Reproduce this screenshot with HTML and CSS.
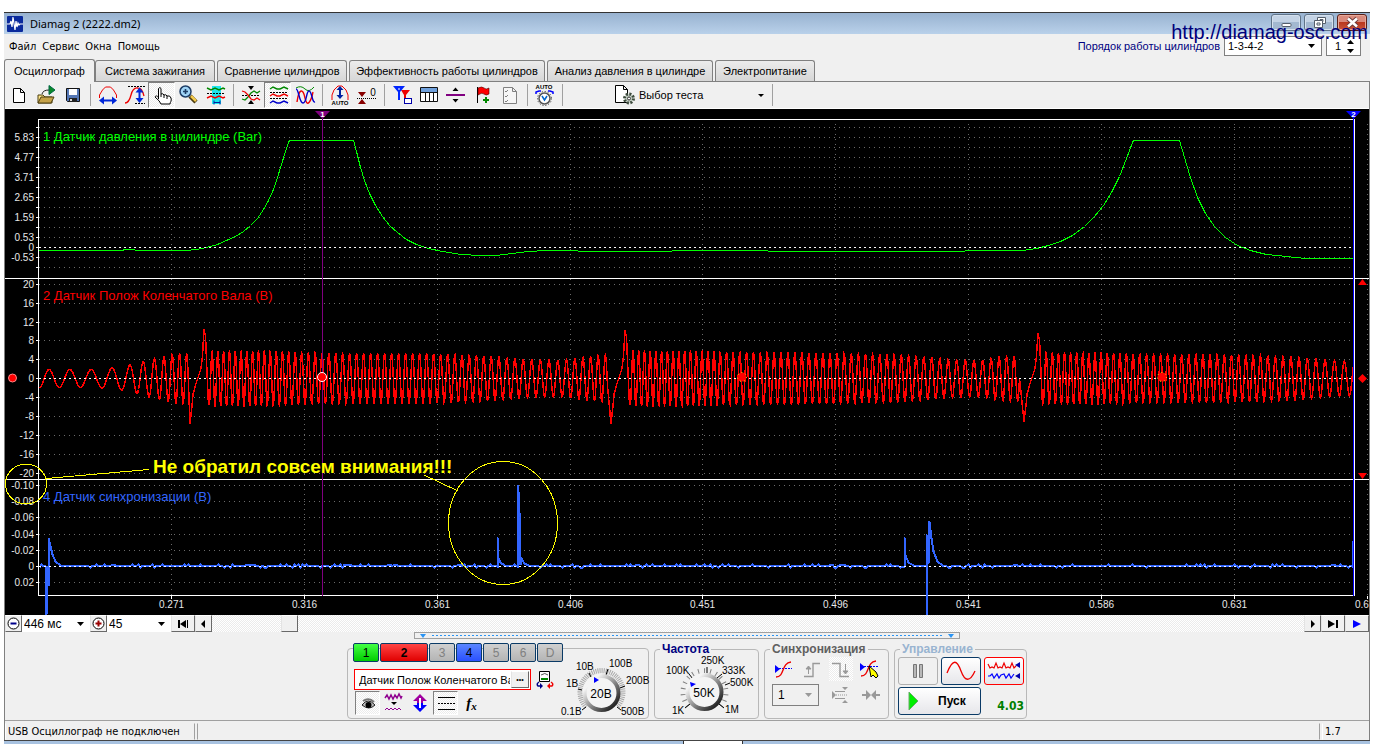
FILE: index.html
```html
<!DOCTYPE html>
<html lang="ru">
<head>
<meta charset="utf-8">
<title>Diamag 2 (2222.dm2)</title>
<link rel="stylesheet" href="styles.css">
</head>
<body>
<div class="window">
  <header class="titlebar">
    <svg class="app-icon" width="16" height="16" viewBox="0 0 16 16"><rect width="16" height="16" rx="1" fill="#0a2a9c"/><path d="M0 8h3l1-3 1 6 1-10 2 13 1-9 1 6 1-4 1 2 1-1h4" fill="none" stroke="#fff" stroke-width="1.2"/></svg>
    <h1 class="title">Diamag 2 (2222.dm2)</h1>
    <div class="window-buttons">
      <button class="wbtn" aria-label="Свернуть"><svg width="28" height="15"><rect x="10" y="8.500" width="9" height="3" rx="1" fill="#fff" stroke="#555e6b"/></svg></button>
      <button class="wbtn" aria-label="Восстановить"><svg width="28" height="15" fill="#fff" stroke="#555e6b"><path d="M12.500 2.500h8v6h-8zM15 4.500h3v2h-3z"/><path d="M9.500 5.500h8v7h-8zM12 8h3v2h-3z"/></svg></button>
      <button class="wbtn close" aria-label="Закрыть"><svg width="28" height="15"><path d="M10 3.500l9 8m0-8l-9 8" stroke="#6a3a3a" stroke-width="4.500"/><path d="M10 3.500l9 8m0-8l-9 8" stroke="#fff" stroke-width="2.600"/></svg></button>
    </div>
    <a class="site" href="#">http://diamag-osc.com</a>
  </header>

  <div class="menubar">
    <nav class="menu"><button>Файл</button><button>Сервис</button><button>Окна</button><button>Помощь</button></nav>
    <div class="order">
      <label for="order">Порядок работы цилиндров</label>
      <span class="box order-box"><select id="order"><option>1-3-4-2</option></select><svg width="7" height="4"><path d="M0 0h7L3.500 4z"/></svg></span>
      <span class="box spin-box"><input id="cyl" type="text" value="1" aria-label="Цилиндр"><svg width="7" height="13"><path d="M0 4h7L3.500 0zM0 9h7l-3.500 4z"/></svg></span>
    </div>
  </div>

  <nav class="tabs">
    <button class="tab active">Осциллограф</button>
    <button class="tab">Система зажигания</button>
    <button class="tab">Сравнение цилиндров</button>
    <button class="tab">Эффективность работы цилиндров</button>
    <button class="tab">Анализ давления в цилиндре</button>
    <button class="tab">Электропитание</button>
  </nav>

  <div class="workspace">
    <div class="toolbar">
      <button class="tool" aria-label="Новый"><svg width="24" height="22" viewBox="6 83 24 22"><path d="M12.500 87.500h7l4 4v10h-11zM19.500 87.500v4h4" fill="#fff" stroke="#000"/></svg></button>
      <button class="tool" aria-label="Открыть"><svg width="24" height="22" viewBox="33 83 24 22"><path d="M37 94h5l2 2h7v6H37z" fill="#ffe68a" stroke="#4d3f10"/><path d="M37 102l3-6h13l-3 6z" fill="#c5a24a" stroke="#4d3f10"/><path d="M41 93q1-4 7-4" fill="none" stroke="#222"/><path d="M48 84.500v9l6-4.500z" fill="#0a8a2a" stroke="#064"/></svg></button>
      <button class="tool" aria-label="Сохранить"><svg width="24" height="22" viewBox="60 83 24 22"><path d="M65.500 87.500h13v13h-12l-1-1z" fill="#5577b5" stroke="#111"/><path d="M68 88h8v6h-8z" fill="#fff"/><path d="M68 97h8v4h-8z" fill="#222"/><path d="M69 98h2v2h-2z" fill="#ddd"/></svg></button>
      <i class="sep"></i>
      <button class="tool" aria-label="Масштаб по времени"><svg width="24" height="22" viewBox="95 83 24 22"><path d="M98.500 97v-3l3-5 3-3h5l3 3 3 5v3" fill="none" stroke="#e00"/><path d="M100 99.500h14" stroke="#0026d8" stroke-width="2"/><path d="M98 99.500l5-4v8zM116 99.500l-5-4v8z" fill="#0026d8"/></svg></button>
      <button class="tool" aria-label="Масштаб по амплитуде"><svg width="24" height="22" viewBox="122 83 24 22"><path d="M127 85.500h17" stroke="#000" stroke-dasharray="2 1"/><path d="M134 102.500h10" stroke="#000" stroke-dasharray="2 1"/><path d="M124 102q4 0 6-8t7-7q4 0 6 8" fill="none" stroke="#e00" stroke-width="1.300"/><path d="M138.500 89v10" stroke="#0026d8" stroke-width="2"/><path d="M138.500 86.500l4 5h-8zM138.500 102l4-5h-8z" fill="#0026d8"/></svg></button>
      <button class="tool pressed" aria-label="Рука"><svg width="24" height="22" viewBox="149 83 24 22"><path d="M157.500 98V87.500q1.500-2 2.500 0V93q2-1 3 1 2-1 3 1 3-1 4 2c1 3-1 4-1 6h-9q-1-3-6-7c1-2 3-1 3.500 1M160 93v3M163 94v3M166 95v3" fill="#fff" stroke="#000"/></svg></button>
      <button class="tool" aria-label="Лупа"><svg width="24" height="22" viewBox="176 83 24 22"><path d="M189 95l6 6" stroke="#4a3a10" stroke-width="4.500"/><path d="M190 95l5 5" stroke="#f2c94c" stroke-width="2.500"/><circle cx="184.500" cy="90.500" r="5.500" fill="#9fd4f7" stroke="#1d3d66" stroke-width="1.500"/><path d="M182 90.500h5m-2.500-2.500v5" stroke="#1d3d66" stroke-width="1.600"/></svg></button>
      <button class="tool" aria-label="Выделение"><svg width="24" height="22" viewBox="203 83 24 22"><path d="M211 85h9v18h-9z" fill="#1ee6f0"/><path d="M206 87l4 2 4-2 4 2 4-2 2 1" fill="none" stroke="#080" stroke-width="1.400"/><path d="M206 92.500h18" stroke="#000" stroke-dasharray="2 1"/><path d="M206 97l4-2 4 2 4-2 4 2 2-1" fill="none" stroke="#e00" stroke-width="1.400"/><path d="M213 101.500h6m-6-2v4m6-4v4" stroke="#0020a0"/></svg></button>
      <i class="sep"></i>
      <button class="tool" aria-label="Совместить"><svg width="24" height="22" viewBox="238 83 24 22"><path d="M247 85h6l-3 4zM247 103h6l-3-4z"/><path d="M241 94.500h18" stroke="#000" stroke-dasharray="2 1"/><path d="M241 98l3 1 3-3 3-4 3-2 3 2 3-2" fill="none" stroke="#080" stroke-width="1.300"/><path d="M241 90l3 1 3 3 3 4 3 1 3-2 3 2" fill="none" stroke="#e00" stroke-width="1.300"/></svg></button>
      <button class="tool pressed" aria-label="Раздельно"><svg width="24" height="22" viewBox="265 83 24 22"><path d="M269 88l3-2 4 2h3l4-2 4 2" fill="none" stroke="#080" stroke-width="1.400"/><path d="M269 91.500h18M269 97.500h18" stroke="#000" stroke-dasharray="2 1"/><path d="M269 95l3-2 4 2h3l4-2 4 2" fill="none" stroke="#e00" stroke-width="1.400"/><path d="M269 102l3-2 4 2h3l4-2 4 2" fill="none" stroke="#00c" stroke-width="1.400"/></svg></button>
      <button class="tool" aria-label="Наложить"><svg width="24" height="22" viewBox="292 83 24 22"><path d="M295 87q5-3 9 1t9-2" fill="none" stroke="#080"/><path d="M296 101c2-14 6-14 8-4s6 4 8-6" fill="none" stroke="#e00" stroke-width="1.400"/><path d="M295 88c3 0 3 14 7 14s3-12 6-12 3 12 6 11" fill="none" stroke="#00c" stroke-width="1.400"/></svg></button>
      <i class="sep"></i>
      <button class="tool" aria-label="Автомасштаб"><svg width="24" height="22" viewBox="327 83 24 22"><path d="M331 99v-5l2-5 4-4h4l4 4 2 5v5" fill="none" stroke="#e00"/><path d="M339 87v9" stroke="#0020a0" stroke-width="2"/><path d="M339 85l3.500 4h-7zM339 98l3.500-4h-7z" fill="#0020a0"/><text class="t-auto" x="339" y="104">AUTO</text></svg></button>
      <button class="tool" aria-label="Обнулить"><svg width="24" height="22" viewBox="354 83 24 22"><path d="M357 91h8l-4 5zM357 103h8l-4-5z" fill="#800"/><path d="M356 97.500h20" stroke="#000" stroke-dasharray="1 1"/><text class="t-zero" x="372" y="95">0</text></svg></button>
      <i class="sep"></i>
      <button class="tool" aria-label="Фильтр"><svg width="24" height="22" viewBox="389 83 24 22"><path d="M400 89h9l-4 5v7h-2v-7z" fill="#e00"/><path d="M392 85h12l-5 6v8h-2v-8z" fill="#0026ff"/><path d="M397 88h2" stroke="#fff"/><rect x="403.500" y="97.500" width="7" height="5" fill="#fff" stroke="#00a"/></svg></button>
      <button class="tool" aria-label="Таблица"><svg width="24" height="22" viewBox="416 83 24 22"><path d="M419.500 86.500h17v14h-17z" fill="#fff" stroke="#111"/><path d="M420 87h16v4h-16z" fill="#6fa0dc"/><path d="M419 91.500h18M424.500 91v10M428.500 91v10M432.500 91v10" stroke="#111"/></svg></button>
      <button class="tool" aria-label="Разделить"><svg width="24" height="22" viewBox="443 83 24 22"><path d="M445 93h19v2h-19z" fill="#800080"/><path d="M451.500 90h6l-3-3.500zM451.500 98h6l-3 3.500z"/></svg></button>
      <button class="tool" aria-label="Добавить метку"><svg width="24" height="22" viewBox="470 83 24 22"><path d="M476.500 86v16" stroke="#000"/><path d="M477 87q4-2 6 0t5 0v6q-3 2-5 0t-6 1z" fill="#f00" stroke="#400" stroke-width=".6"/><path d="M485 96v6m-3-3h6" stroke="#080" stroke-width="2"/></svg></button>
      <button class="tool" aria-label="Список"><svg width="24" height="22" viewBox="497 83 24 22"><path d="M502.500 86.500h9l4 4v12h-13zM511.500 86.500v4h4" fill="#f6f6f6" stroke="#808080"/><path d="M504 90l1 1 2-2M504 95l1 1 2-2M504 100l1 1 2-2" fill="none" stroke="#808080"/></svg></button>
      <i class="sep"></i>
      <button class="tool" aria-label="Авто"><svg width="24" height="22" viewBox="532 83 24 22"><text class="t-auto" x="543" y="88">AUTO</text><circle cx="543.500" cy="97.500" r="5.500" fill="#fff" stroke="#555" stroke-width="1.500"/><circle cx="543.500" cy="97.500" r="7" fill="none" stroke="#222" stroke-width="1" stroke-dasharray="1 2"/><path d="M541 95l2.500 4 2.500-4" fill="none" stroke="#06c" stroke-width="1.500"/><path d="M535 93v-2l3-1h2M552 93v-2l-3-1h-2" fill="none" stroke="#00f" stroke-width="1.500"/></svg></button>
      <i class="sep"></i>
      <span class="test">
        <svg width="22" height="22" viewBox="615 83 22 22"><path d="M616.500 84.500h8l4 4v13h-12zM624.500 84.500v4h4" fill="#fff" stroke="#000"/><circle cx="630" cy="97.500" r="4.500" fill="#c4cfc4" stroke="#3c4a3c" stroke-width="3" stroke-dasharray="2 1.500"/><circle cx="630" cy="97.500" r="1.500" fill="#fff" stroke="#333"/></svg>
        <select aria-label="Выбор теста"><option>Выбор теста</option></select>
        <svg width="6" height="3"><path d="M0 0h6L3 3z"/></svg>
      </span>
      <i class="sep"></i>
    </div>

    <svg id="scope" class="scope" viewBox="5 109 1364 506" role="img" aria-label="Осциллограмма"></svg>

    <div class="timebar">
      <button class="tb zoom" aria-label="Меньше"><svg width="15" height="15"><circle cx="7.500" cy="7.500" r="5.500" fill="#fff" stroke="#000"/><path d="M4.500 7.500h6" stroke="#00008b" stroke-width="2"/></svg></button>
      <span class="combo wide"><select aria-label="Развёртка"><option>446 мс</option></select><svg width="7" height="4"><path d="M0 0h7L3.500 4z"/></svg></span>
      <button class="tb zoom" aria-label="Больше"><svg width="15" height="15"><circle cx="7.500" cy="7.500" r="5.500" fill="#fff" stroke="#000"/><path d="M4.500 7.500h6m-3-3v6" stroke="#900" stroke-width="2"/></svg></button>
      <span class="combo"><select aria-label="Шаг"><option>45</option></select><svg width="7" height="4"><path d="M0 0h7L3.500 4z"/></svg></span>
      <button class="tb nav" aria-label="В начало"><svg width="12" height="8"><path d="M1 0h2v8H1zM9 0v8L3 4zM10 0h1v8h-1z"/></svg></button>
      <button class="tb arrow" aria-label="Назад"><svg width="5" height="8"><path d="M4 0v8L0 4z"/></svg></button>
      <div class="track"><span class="thumb"></span></div>
      <button class="tb arrow" aria-label="Вперёд"><svg width="5" height="8"><path d="M1 0v8l4-4z"/></svg></button>
      <button class="tb nav" aria-label="В конец"><svg width="12" height="8"><path d="M1 0v8l7-4zM9 0h2v8H9z"/></svg></button>
      <button class="tb nav" aria-label="Воспроизвести"><svg width="10" height="8"><path d="M1 0v8l8-4z" fill="#00f"/></svg></button>
    </div>

    <div class="panel">
      <div class="splitter"><svg width="6" height="4"><path d="M0 0h6L3 4z"/></svg><i></i><svg width="6" height="4"><path d="M0 0h6L3 4z"/></svg></div>
      <div class="groups">
        <section class="group channel">
          <div class="channel-left">
            <div class="channels"><button class="ch green">1</button><button class="ch red">2</button><button class="ch off">3</button><button class="ch blue">4</button><button class="ch off">5</button><button class="ch off">6</button><button class="ch off">D</button></div>
            <div class="sensor-row">
              <span class="sensor"><input type="text" value="Датчик Полож Коленчатого Вала" aria-label="Датчик"><button aria-label="Выбрать">•••</button></span>
              <svg width="20" height="20" viewBox="534 669 20 20"><path d="M538.500 670.500h10v10h-10z" fill="#fff" stroke="#000"/><path d="M540 678h7" stroke="#080" stroke-width="2"/><path d="M540 674q4-3 7 0" fill="none" stroke="#555"/><path d="M538 681q-3 2-1 4h3" fill="none" stroke="#008" stroke-width="1.500"/><path d="M539 682v6l3-3z" fill="#008"/><path d="M550 681q3 2 1 4h-3" fill="none" stroke="#e00" stroke-width="1.500"/><path d="M549 682v6l-3-3z" fill="#e00"/></svg>
            </div>
            <div class="modes">
              <button class="mode pressed" aria-label="Видимость"><svg width="24" height="22"><path d="M6 13q6-8 13 0-6 6-13 0" fill="#bbb" stroke="#222"/><path d="M7 9q6-4 11 1" fill="none" stroke="#777" stroke-width="2"/><circle cx="12.500" cy="13" r="3"/></svg></button>
              <button class="mode" aria-label="Сглаживание"><svg width="24" height="22" fill="none" stroke="#900090"><path d="M3 6l2-3 2 4 2-4 2 4 2-4 2 3 2-4 2 4 1-2" stroke-width="1.500"/><path d="M3 18l2-2 2 2 2-2 2 2 2-2 2 2 2-2 2 2"/><path d="M9 10h6l-3 3z" fill="#000" stroke="none"/></svg></button>
              <button class="mode" aria-label="Сдвиг"><svg width="24" height="22"><path d="M12 2l7 7h-4v3H9V9H5z" fill="#a000a0"/><path d="M12 20l7-7h-4v-2H9v2H5z" fill="#00f"/><path d="M12 6v10" stroke="#fff" stroke-width="2"/></svg></button>
              <button class="mode pressed" aria-label="Линии"><svg width="24" height="22"><path d="M4 5.500h17M4 17.500h17" stroke="#000"/><path d="M4 11.500h17" stroke="#000" stroke-dasharray="2 1"/></svg></button>
              <button class="mode fx">f<sub>x</sub></button>
            </div>
          </div>
          <svg class="dial" width="90" height="64" viewBox="559 653 90 64">
            <defs><linearGradient id="knob" x1="0" y1="0" x2="1" y2="1"><stop offset="0.200" stop-color="#f4f4f4"/><stop offset="0.600" stop-color="#777"/><stop offset="1" stop-color="#000"/></linearGradient></defs>
            <path d="M585 706A21.500 21.500 0 1 1 616 706" class="scale"/>
            <path d="M581 709l4-3M577 688l4 1M588 672l2 4M607 668l-2 6M624 685l-5 2M620 709l-4-3" stroke="#000"/>
            <circle cx="600.500" cy="692" r="17" fill="#f4f4f4" stroke="url(#knob)" stroke-width="4"/>
            <path d="M593 676v6l5-3z" fill="#00f"/>
            <text class="value" x="600" y="697">20B</text>
            <g class="marks"><text x="560" y="714">0.1B</text><text x="565" y="686">1B</text><text x="575" y="669">10B</text><text x="608" y="666">100B</text><text x="625" y="683">200B</text><text x="620" y="714">500B</text></g>
          </svg>
        </section>

        <fieldset class="group freq"><legend>Частота</legend>
          <svg class="dial" width="98" height="62" viewBox="658 655 98 62">
            <path d="M688 706A21.500 21.500 0 1 1 721 706" class="scale sparse"/>
            <path d="M685 708l5-4M689 674l4 5M707 667v6M722 674l-5 4M730 683l-5 2M724 708l-5-4" stroke="#000"/>
            <circle cx="704.500" cy="692" r="17" fill="#f4f4f4" stroke="url(#knob)" stroke-width="4"/>
            <path d="M690 682l1 5 5-3z" fill="#00f"/>
            <text class="value" x="704" y="697">50K</text>
            <g class="marks"><text x="672" y="714">1K</text><text x="666" y="674">100K</text><text x="701" y="664">250K</text><text x="722" y="674">333K</text><text x="730" y="686">500K</text><text x="725" y="713">1M</text></g>
          </svg>
        </fieldset>

        <fieldset class="group sync"><legend>Синхронизация</legend>
          <div class="sync-row">
            <button class="sy" aria-label="Уровень"><svg width="20" height="20"><path d="M1 6v8l5-4z" fill="#00f"/><path d="M5 9.500h13" stroke="#00f" stroke-dasharray="2 1"/><path d="M2 18c9 0 5-14 15-15" fill="none" stroke="#e00" stroke-width="1.400"/></svg></button>
            <button class="sy" aria-label="Фронт"><svg width="20" height="20" fill="none" stroke="#999"><path d="M2 17.500h9V4.500h7" stroke-width="1.400"/><path d="M6.500 15V9M4 10l2.500-3L9 10z" fill="#999"/></svg></button>
            <button class="sy hatch" aria-label="Спад"><svg width="20" height="20" fill="none" stroke="#999"><path d="M1 4.500h8v13h9" stroke-width="1.400"/><path d="M14.500 5v7M12 12l2.500 3 2.500-3z" fill="#999"/></svg></button>
            <button class="sy" aria-label="Указать уровень"><svg width="20" height="20"><path d="M1 4v8l5-4z" fill="#00f"/><path d="M5 7.500h14" stroke="#00f" stroke-dasharray="2 1"/><path d="M2 17c9 0 5-14 15-15" fill="none" stroke="#e00" stroke-width="1.400"/><path d="M10 7l2 11 2-2 3 3 2-2-2-4z" fill="#ff0" stroke="#000"/></svg></button>
          </div>
          <div class="sync-row second">
            <span class="box sync-box"><select aria-label="Канал синхронизации"><option>1</option></select><svg width="7" height="4"><path d="M0 0h7L3.500 4z" fill="#999"/></svg></span>
            <svg width="20" height="20" fill="#999" stroke="#999"><path d="M2 6v8l4-4zM12 2h6l-3 3zM12 18h6l-3-3z" stroke="none"/><path d="M5 6.500h10M5 13.500h10"/><path d="M6 10h12" stroke-dasharray="1 1"/></svg>
            <svg width="20" height="20" fill="#999"><path d="M1 9h4V5l5 5-5 5v-4H1zM19 9h-4V5l-5 5 5 5v-4h4z"/></svg>
          </div>
        </fieldset>

        <fieldset class="group control"><legend>Управление</legend>
          <div class="control-grid">
            <button class="cb flat" aria-label="Пауза"><svg width="12" height="16" fill="#b8b8b8" stroke="#777"><path d="M1.500 1.500h3v13h-3zM7.500 1.500h3v13h-3z"/></svg></button>
            <button class="cb" aria-label="Однократно"><svg width="30" height="22"><path d="M1 13C7-2 11 0 15 11s9 11 14 0" fill="none" stroke="#e00" stroke-width="1.300"/></svg></button>
            <button class="cb loop" aria-label="Непрерывно"><svg width="34" height="22" fill="none"><path d="M1 4l2 4 2-1 2 1 2-5 2 5 2-1 2 1 2-5 2 5 2-1 2 1 2-5 2 5 2-2" stroke="#e00" stroke-width="1.200"/><path d="M1 16h2l2-2 2 4 3-4 2 4 2-3 3-1 2 4 3-4 2 4 3-4" stroke="#00f" stroke-width="1.200"/><path d="M33 2v6l-5-3zM33 13v6l-5-3z" fill="#00a"/></svg></button>
            <button class="cb start"><svg width="12" height="20"><path d="M1 1v18l9-9z" fill="#0e0" stroke="#6a6" /></svg><span>Пуск</span></button>
            <output class="reading">4.03</output>
          </div>
        </fieldset>
      </div>
    </div>

    <footer class="status"><span class="cell msg">USB Осциллограф не подключен</span><span class="cell fill"></span><span class="cell version">1.7</span></footer>
  </div>
  <div class="underlay"><span></span></div>
</div>
<script src="scope.js"></script>
</body>
</html>
```
FILE: styles.css
```css
* { box-sizing: border-box; }
body {
  margin: 0;
  padding: 12px 12px 0 4px;
  background: #fff;
  color: #000;
  font: 11px/14px "Liberation Sans", Arial, sans-serif;
}
button, select, input { font: inherit; color: inherit; margin: 0; padding: 0; border: 0; background: none; border-radius: 0; outline: 0; }
select { appearance: none; }
svg { display: block; flex: none; }
.window { background: #f0f0f0; border-top: 1px solid #333; }

.titlebar {
  position: relative;
  display: flex;
  align-items: center;
  height: 21px;
  padding: 0 3px;
  background: linear-gradient(#98b2d0, #b9d1ea);
}
.title { flex: 1; margin: 0 0 0 7px; font: 11px/16px "Noto Sans", "Open Sans", sans-serif; }
.window-buttons { display: flex; gap: 3px; align-self: flex-start; padding-top: 1px; }
.wbtn {
  width: 30px;
  height: 17px;
  border: 1px solid #5f7388;
  border-radius: 3px;
  box-shadow: inset 0 0 0 1px #d4e0ee;
  background: linear-gradient(#c4d3e5 50%, #a3b8d0 50%);
}
.wbtn.close { border-color: #5a2018; box-shadow: inset 0 0 0 1px #e8a898; background: linear-gradient(#d98a7c 45%, #b8351c 45%, #c9553a); }
.site {
  position: absolute;
  right: 2px;
  top: 7px;
  color: #00007b;
  font-size: 20px;
  line-height: 24px;
  text-decoration: none;
}

.menubar { display: flex; justify-content: space-between; height: 25px; padding: 0 9px 0 5px; }
.menu { display: flex; align-items: center; gap: 6px; font: 11px/14px "DejaVu Sans Condensed", "DejaVu Sans", sans-serif; }
.order { display: flex; align-items: flex-start; gap: 4px; }
.order label { color: #000080; padding-top: 5px; }
.box { display: flex; align-items: center; height: 20px; padding: 0 6px 0 3px; border: 1px solid #808080; background: #fff; margin-top: 2px; }
.box select, .box input { flex: 1; min-width: 0; width: 0; }
.order-box { width: 98px; }
.spin-box { width: 35px; padding-left: 8px; }

.tabs { display: grid; grid-template-columns: 91px 122px 132px 198px 168px 102px; align-items: end; height: 22px; }
.tab {
  height: 21px;
  margin-right: 2px;
  border: 1px solid #808080;
  border-bottom: 0;
  border-radius: 3px 3px 0 0;
  background: linear-gradient(#ececec, #d6d6d6);
  white-space: nowrap;
}
.tab.active { height: 23px; margin: 0 0 -1px; background: #f0f0f0; position: relative; }

.workspace { border: 1px solid #808080; border-bottom: 0; }
.toolbar { display: flex; align-items: center; height: 27px; border-bottom: 1px solid #fff; }
.tool { display: grid; place-items: center; width: 27px; height: 26px; }
.pressed { border: 1px solid #fff; border-color: #808080 #fff #fff #808080; background: repeating-conic-gradient(#fff 0 25%, #ececec 0 50%) 0 0 / 2px 2px; }
.sep { width: 1px; height: 22px; margin: 0 3px 0 4px; background: #a0a0a0; }
.t-auto { font: bold 6px "Liberation Sans", sans-serif; text-anchor: middle; }
.t-zero { font: 10px "Liberation Sans", sans-serif; text-anchor: middle; }
.test { display: flex; align-items: center; gap: 3px; width: 202px; padding: 0 4px 0 48px; }
.test select { flex: 1; min-width: 0; }

.scope { width: 100%; height: auto; background: #000; }
.scope text { font-family: "Liberation Sans", Arial, sans-serif; }
.grid { stroke: #6a6a6a; stroke-dasharray: 1 4; shape-rendering: crispEdges; }
.frame { stroke: #fff; fill: none; shape-rendering: crispEdges; }
.zero { stroke: #fff; stroke-dasharray: 2 3; shape-rendering: crispEdges; }
.trace { fill: none; shape-rendering: crispEdges; }
.axis { font-size: 10px; fill: #e8e8e8; }
.axis.y { text-anchor: end; }
.axis.x { text-anchor: middle; }
.name { font-size: 13px; }
.note { font-size: 19px; font-weight: bold; fill: #ff0; }
.pen { fill: none; stroke: #ff0; shape-rendering: crispEdges; }
.flag { font-size: 8px; font-weight: bold; fill: #fff; text-anchor: middle; }

.timebar { display: flex; height: 17px; background: #fff; font-size: 12px; }
.tb { display: grid; place-items: center; border: 1px solid; border-color: #fff #696969 #696969 #e3e3e3; background: #f0f0f0; }
.tb.zoom { width: 17px; }
.tb.nav { width: 24px; }
.tb.arrow { width: 17px; }
.combo { display: flex; align-items: center; width: 64px; padding: 0 6px 0 2px; }
.combo.wide { width: 68px; }
.combo select { flex: 1; min-width: 0; }
.track { flex: 1; padding-left: 69px; background: repeating-conic-gradient(#fff 0 25%, #ebebeb 0 50%) 0 0 / 2px 2px; }
.thumb { display: block; width: 17px; height: 17px; border: 1px solid; border-color: #fff #696969 #696969 #e3e3e3; background: #f0f0f0; }

.panel { display: flex; flex-direction: column; align-items: center; height: 88px; }
.splitter { display: flex; align-items: center; gap: 6px; width: 546px; height: 7px; padding: 0 5px; border: 1px solid #a0a0a0; fill: #2a94f4; }
.splitter i { flex: 1; height: 1px; background: repeating-linear-gradient(90deg, #2a94f4 0 2px, transparent 2px 4px); }
.groups { display: flex; gap: 5px; align-items: flex-end; height: 80px; }
.group { margin: 0; padding: 0; border: 1px solid #b8b8b8; border-radius: 4px; height: 71px; min-width: 0; }
fieldset.group { height: 76px; }
.group legend { margin-left: 5px; padding: 0 2px; font-size: 12px; font-weight: bold; line-height: 12px; white-space: nowrap; }
.channel { display: flex; width: 302px; }
.channel-left { width: 212px; padding-left: 5px; }
.channels { display: flex; gap: 1px; margin-top: -6px; width: 212px; }
.ch { width: 26px; height: 19px; border: 1px solid #0a3a66; border-radius: 2px; font-size: 12px; }
.green { background: linear-gradient(#4f4, #0c0); }
.red { width: 48px; font-weight: bold; background: linear-gradient(#f44, #e00000); }
.blue { background: linear-gradient(#5a86ff, #2a50ff); }
.off { color: #808080; background: linear-gradient(#d0d0d0, #b4b4b4); }
.sensor-row { display: flex; align-items: center; gap: 4px; margin: 7px 0 1px 1px; }
.sensor { display: flex; width: 177px; height: 21px; border: 1px solid #f00; background: #fff; }
.sensor input { flex: 1; min-width: 0; padding-left: 4px; }
.sensor button { width: 18px; margin: 1px; border: 1px solid; border-color: #fff #696969 #696969 #e3e3e3; background: #f0f0f0; font-size: 7px; line-height: 8px; }
.modes { display: flex; gap: 1px; padding-left: 2px; }
.mode { display: grid; place-items: center; width: 25px; height: 24px; }
.mode.fx { display: block; font: italic bold 15px/20px "Liberation Serif", serif; }
.fx sub { font-size: 11px; vertical-align: -2px; line-height: 8px; }
.dial { margin-top: 5px; }
.scale { fill: none; stroke: #a8a8a8; stroke-width: 5; stroke-dasharray: 1 1; }
.scale.sparse { stroke-dasharray: 1 5; stroke: #808080; }
.marks { font-size: 10px; }
.value { font-size: 12px; text-anchor: middle; }
.freq { width: 105px; }
.freq legend { color: #000080; }
.freq .dial { margin: 0 0 0 3px; }
.sync { width: 125px; }
.sync legend { color: #606060; }
.sync-row { display: flex; justify-content: space-between; padding: 2px 7px 0 7px; }
.sy { display: grid; place-items: center; width: 24px; height: 24px; }
.hatch { background: repeating-conic-gradient(#fff 0 25%, #ececec 0 50%) 0 0 / 2px 2px; }
.sync-row.second { align-items: center; padding-top: 3px; }
.sync-box { width: 47px; height: 22px; margin: 0; padding-left: 5px; background: #f0f0f0; font-size: 12px; }
.control { width: 133px; }
.control legend { color: #99b4d1; }
.control-grid { display: grid; grid-template-columns: 40px 40px 40px; grid-template-rows: 28px 28px; gap: 2px 3px; padding: 2px 0 0 3px; }
.cb { display: grid; place-items: center; border: 1px solid #0a3a66; border-radius: 3px; background: linear-gradient(#fff, #e6e6ea); }
.cb.flat { border-color: #b0b0b0; background: #f0f0f0; }
.cb.loop { border-color: #f00; }
.cb.start { grid-column: span 2; display: flex; align-items: center; gap: 18px; padding-left: 9px; font-size: 12px; font-weight: bold; }
.reading { align-self: end; padding-bottom: 1px; text-align: right; color: #008000; font: bold 12px/16px "DejaVu Sans Condensed", "DejaVu Sans", sans-serif; }

.status { display: flex; gap: 2px; height: 20px; border-top: 1px solid #a0a0a0; padding-top: 2px; font: 11px/16px "DejaVu Sans Condensed", "DejaVu Sans", sans-serif; }
.cell { border: 1px solid; border-color: #f0f0f0 #a0a0a0 #f0f0f0 #fff; padding-left: 2px; white-space: nowrap; }
.msg { width: 190px; }
.fill { flex: 1; border-left-color: #a0a0a0; }
.version { width: 47px; border-right: 0; }
.underlay { height: 4px; border-top: 1px solid #444; background: #a8c2e0; }
.underlay span { display: block; width: 60px; height: 3px; margin-left: 679px; border: solid #333; border-width: 0 1px; background: #fff; }
```
FILE: scope.js
```js
const svg = document.getElementById("scope");
const LEFT = 38, RIGHT = 1353;
const out = [];
const line = (x1, y1, x2, y2, cls, extra = "") =>
  out.push(`<line x1="${x1}" y1="${y1}" x2="${x2}" y2="${y2}" class="${cls}" ${extra}/>`);
const label = (x, y, text, cls, extra = "") =>
  out.push(`<text x="${x}" y="${y}" class="${cls}" ${extra}>${text}</text>`);

// Grid and axis labels
const channels = [
  { zero: 247, rows: [127, 137, 147, 157, 167, 177, 187, 197, 207, 217, 227, 237, 247, 257, 267],
    labels: { 137: "5.83", 157: "4.77", 177: "3.71", 197: "2.65", 217: "1.59", 237: "0.53", 247: "0", 257: "-0.53" } },
  { zero: 378, rows: [284, 303, 322, 340, 359, 378, 397, 416, 435, 454, 473],
    labels: { 284: "20", 303: "16", 322: "12", 340: "8", 359: "4", 378: "0", 397: "-4", 416: "-8", 435: "-12", 454: "-16", 473: "-20" } },
  { zero: 566, rows: [485, 501, 517, 534, 550, 566, 582],
    labels: { 485: "-0.10", 501: "-0.08", 517: "-0.06", 534: "-0.04", 550: "-0.02", 566: "0", 582: "0.02" } }
];
for (const c of channels) {
  for (const y of c.rows) {
    if (y !== c.zero) line(LEFT + 1, y + 0.5, RIGHT, y + 0.5, "grid");
    line(LEFT - 2, y + 0.5, LEFT, y + 0.5, "frame");
    if (c.labels[y]) label(34, y + 4, c.labels[y], "axis y");
  }
}
["0.271", "0.316", "0.361", "0.406", "0.451", "0.496", "0.541", "0.586", "0.631", "0.676"].forEach((t, i) => {
  const x = Math.round(171 + i * 132.85) + 0.5;
  line(x, 124, x, 595, "grid");
  line(x, 596, x, 599, "frame");
  label(x, 608, t, "axis x");
});
line(LEFT, 119.5, RIGHT + 1, 119.5, "frame");
line(LEFT + 0.5, 119, LEFT + 0.5, 596, "frame");
line(LEFT, 595.5, RIGHT + 1, 595.5, "frame");
line(5, 278.5, 1369, 278.5, "frame");
line(5, 479.5, 1369, 479.5, "frame");

const trace = (pts, color, width = 1) =>
  out.push(`<polyline class="trace" points="${pts.map(p => (p[0] + 0.5).toFixed(1) + "," + (p[1] + 0.5).toFixed(1)).join(" ")}" stroke="${color}" stroke-width="${width}"/>`);

// Channel 1: cylinder pressure
trace([[38, 250], [122, 250], [124, 249], [134, 249], [135, 250], [185, 250], [196, 249], [206, 247], [217, 244], [226, 240], [235, 236], [243, 231],
  [250, 225], [257, 218], [263, 209], [268, 200], [273, 189], [277, 177], [281, 164], [285, 151], [288, 142], [289, 140], [353, 140],
  [356, 151], [360, 167], [364, 180], [369, 193], [375, 205], [382, 216], [389, 225], [397, 232], [406, 239], [416, 244], [428, 248],
  [442, 251], [460, 254], [480, 255], [495, 255], [512, 253], [528, 251], [545, 250], [610, 251], [735, 250], [800, 251], [930, 251], [1000, 250],
  [1022, 250], [1036, 248], [1048, 245], [1060, 241], [1072, 235], [1084, 226], [1094, 216], [1103, 205], [1111, 192], [1119, 176], [1126, 158],
  [1132, 142], [1133, 140], [1179, 140], [1184, 157], [1190, 177], [1197, 197], [1205, 213], [1214, 226], [1225, 237], [1237, 245],
  [1250, 250], [1266, 254], [1286, 256], [1305, 258], [1353, 258]], "#0f0");

// Channel 2: crankshaft teeth; keys are [x, tooth period, amplitude]
const lerp = (keys, x, k) => {
  for (let i = 1; i < keys.length; i++) {
    if (x <= keys[i][0]) {
      const a = keys[i - 1], b = keys[i];
      return a[k] + (b[k] - a[k]) * (x - a[0]) / (b[0] - a[0]);
    }
  }
  return keys[keys.length - 1][k];
};
const teeth = (pts, x0, x1, phase, keys) => {
  let p = phase;
  for (let x = x0; x <= x1; x += 0.5) {
    pts.push([x, 378 - Math.sin(p) * lerp(keys, x, 2)]);
    p += Math.PI / lerp(keys, x, 1);
  }
};
const gap = (pts, x, low, high) => pts.push([x, low], [x + 2, 405], [x + 3, 394], [x + 6, 383], [x + 8, 377], [x + 11, 368],
  [x + 12.5, 355], [x + 14, high], [x + 15.5, high + 6], [x + 17, 372], [x + 18.5, 404]);
const red = [];
teeth(red, 39, 187, -1.6, [[39, 18, 9], [55, 21, 9], [95, 21.5, 9], [118, 19, 11], [136, 13, 15], [150, 11, 19], [165, 8.5, 22], [175, 7.3, 25], [187, 7, 25]]);
gap(red, 189.5, 423, 329);
teeth(red, 209, 607, -1.2, [[209, 5.8, 28], [260, 5.8, 28], [310, 6.8, 26], [360, 7, 25], [430, 7, 25], [480, 7.3, 23], [525, 8.5, 19], [560, 8.8, 18], [590, 7.6, 22], [607, 7, 24]]);
gap(red, 610.5, 423, 330);
teeth(red, 630, 1019, -1.2, [[630, 5.7, 28], [700, 5.8, 28], [740, 6.8, 26], [800, 7, 26], [900, 7.2, 24], [950, 8.5, 19], [980, 8.8, 18], [1000, 7.6, 22], [1019, 7.2, 23]]);
gap(red, 1023.5, 421, 333);
teeth(red, 1043, 1353, -1.2, [[1043, 6.1, 26], [1100, 6.1, 26], [1150, 7, 24], [1210, 7.1, 24], [1260, 7.3, 23], [1300, 8.2, 21], [1330, 9.5, 18], [1353, 10.5, 17]]);
trace(red, "#f00", 1.5);

// Channel 4: sync pulses over low-level noise
let seed = 7;
const rnd = () => (seed = (seed * 16807) % 2147483647) / 2147483647;
const blue = [];
const noise = (a, b) => {
  for (let x = a; x < b; x += 2) {
    const r = rnd();
    blue.push([x, r > 0.86 ? 564 : r < 0.08 ? 567 : 565.5]);
  }
};
noise(39, 44);
blue.push([45, 566], [45, 615], [46, 615], [47, 566], [48, 585], [48, 538], [50, 546], [52, 554], [55, 561], [60, 565]);
noise(62, 496);
blue.push([497, 566], [497, 537], [498, 558], [500, 562], [504, 565]);
noise(506, 515);
blue.push([517, 566], [517, 485], [518.5, 494], [519.5, 530], [520, 564], [521, 558], [524, 563], [528, 565]);
noise(530, 902);
blue.push([904, 566], [904, 537], [905, 555], [908, 562], [913, 565]);
noise(915, 924);
blue.push([926, 566], [926, 614], [926, 534], [928, 563], [929, 521], [931, 538], [933, 551], [937, 561], [942, 565]);
noise(944, 1351);
blue.push([1352, 566], [1352, 540]);
trace(blue, "#3366ff", 2);

for (const c of channels) line(LEFT + 1, c.zero + 0.5, RIGHT, c.zero + 0.5, "zero");

// Cursors
line(322.5, 112, 322.5, 596, "trace", 'stroke="#800080"');
line(1353.5, 112, 1353.5, 596, "trace", 'stroke="#00f"');
line(1354.5, 119, 1354.5, 596, "frame");
out.push('<path d="M315 111h15l-7.500 8z" fill="#800080"/><path d="M1346 111h15l-7.500 8z" fill="#00f"/>');
label(322.5, 117, "1", "flag");
label(1353.5, 117, "2", "flag");

// Level markers
out.push('<circle cx="12.500" cy="378" r="4" fill="#f00" stroke="#f88"/>',
  '<circle cx="322" cy="377" r="4.500" fill="#f00" stroke="#fff"/>',
  '<circle cx="742" cy="377" r="4.500" fill="#f00" stroke="#ff0" stroke-dasharray="1 3"/>',
  '<circle cx="1162" cy="377" r="4.500" fill="#f00" stroke="#ff0" stroke-dasharray="1 3"/>',
  '<path d="M1358 285h9l-4.500-6zM1358 473h9l-4.500 6zM1358 378.500l4.500-4.500 4.500 4.500-4.500 4.500z" fill="#f00"/>');

label(43, 141, "1 Датчик давления в цилиндре (Bar)", "name", 'fill="#0f0"');
label(43, 300, "2 Датчик Полож Коленчатого Вала (В)", "name", 'fill="#f00"');
label(43, 501, "4 Датчик синхронизации (В)", "name", 'fill="#3366ff"');

// Annotation
out.push('<ellipse class="pen" cx="26" cy="484" rx="20.500" ry="20"/><ellipse class="pen" cx="503" cy="523" rx="54.500" ry="61.500"/>',
  '<path class="pen" d="M46 478.500L149 469.500M424 475l34 16"/>');
label(153, 473, "Не обратил совсем внимания!!!", "note");

svg.innerHTML = out.join("");
```
